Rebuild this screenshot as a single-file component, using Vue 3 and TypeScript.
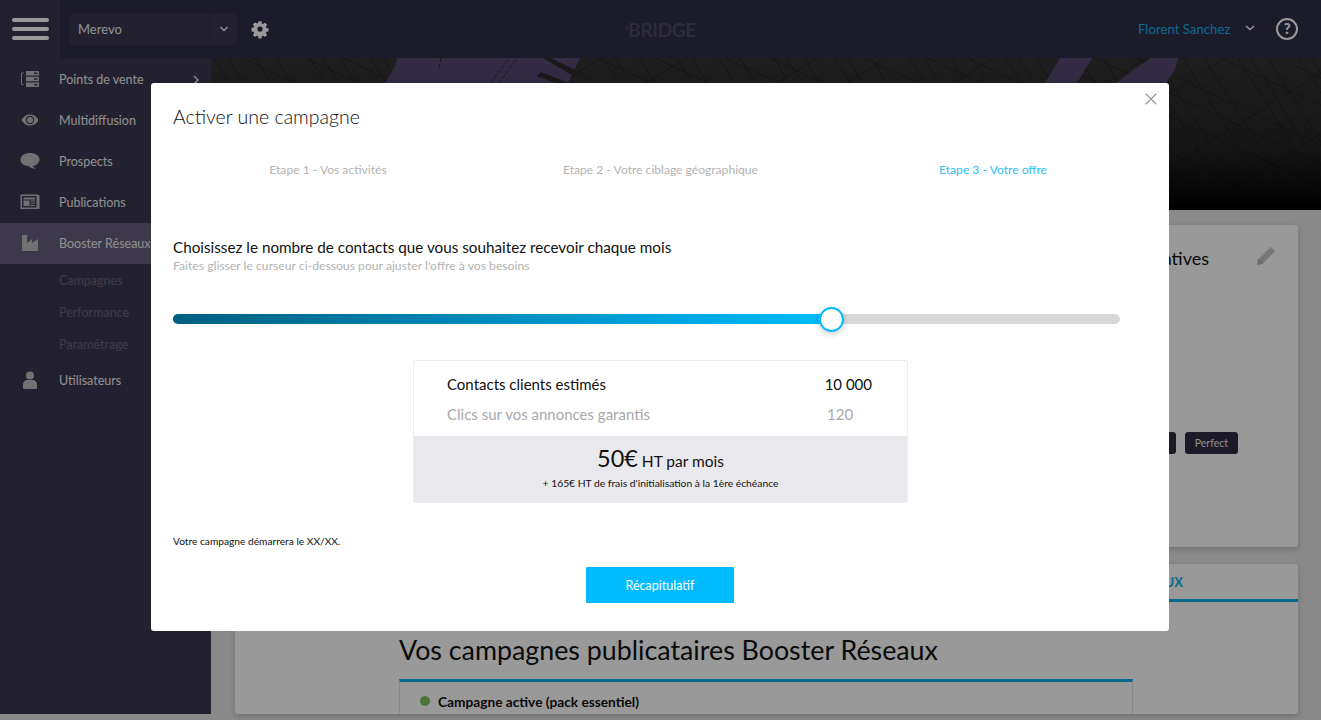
<template>
  <div class="app">
    <header class="topbar">
      <div class="burger"><span></span><span></span><span></span></div>
      <div class="account">
        <span class="account-name">Merevo</span>
        <span class="account-arrow">
          <svg width="10" height="6" viewBox="0 0 10 6"><path d="M1.500 1 5 4.500 8.500 1" fill="none" stroke="currentColor" stroke-width="1.400" /></svg>
        </span>
      </div>
      <svg class="gear" width="20" height="20" viewBox="0 0 20 20">
        <path fill-rule="evenodd" d="M8.300 1.500h3.400l.4 2.400 1.500.6 2-1.400 2.300 2.300-1.400 2 .6 1.500 2.400.4v3.400l-2.400.4-.6 1.500 1.400 2-2.300 2.300-2-1.400-1.500.6-.4 2.400H8.300l-.4-2.400-1.500-.6-2 1.400-2.300-2.300 1.400-2-.6-1.500-2.400-.4V8.800l2.400-.4.6-1.500-1.400-2 2.300-2.300 2 1.400 1.500-.6zM10 7.200a2.900 2.900 0 1 0 0 5.800a2.900 2.900 0 0 0 0-5.800z" transform="translate(1 1) scale(.9)" />
      </svg>
      <div class="logo"><sup>s</sup>BRIDGE</div>
      <div class="user">Florent Sanchez</div>
      <svg class="user-arrow" width="10" height="6" viewBox="0 0 10 6"><path d="M1 1 5 4.500 9 1" fill="none" stroke="currentColor" stroke-width="1.500" /></svg>
      <div class="help">?</div>
    </header>

    <div class="body">
      <aside class="sidebar">
        <div v-for="item in menu" :key="item.label" class="menu-row" :class="{ active: item.active, sub: item.sub }">
          <svg v-if="item.icon" class="menu-icon" width="22" height="22" viewBox="0 0 22 22" v-html="item.icon"></svg>
          <span class="menu-label">{{ item.label }}</span>
          <svg v-if="item.chevron" class="menu-chevron" width="6" height="10" viewBox="0 0 6 10"><path d="M1 1l4 4-4 4" fill="none" stroke="currentColor" stroke-width="1.300" /></svg>
        </div>
      </aside>

      <main class="content">
        <div class="hero">
          <svg width="1110" height="152" viewBox="0 0 1110 152">
            <defs>
              <linearGradient id="fade" x1="0" y1="0" x2="0" y2="1">
                <stop offset="0" stop-color="#000" stop-opacity="0" />
                <stop offset=".6" stop-color="#000" stop-opacity=".3" />
                <stop offset="1" stop-color="#000" stop-opacity="1" />
              </linearGradient>
            </defs>
            <rect width="1110" height="152" fill="#333" />
            <g stroke="#262626" stroke-width="1" fill="none">
              <path v-for="l in streets" :key="l" :d="l" />
            </g>
            <path d="M174 25 184 8 186 0H369L357 25zM834 25 849 0H881L866 25zM905 25 925 10 940 0H967L964 12 955 25z" fill="#584a73" />
            <path d="M340 0 368 14 364 19 332 0zM330 14 358 25H344L326 18z" fill="#2c2c2c" />
            <path d="M280 25 298 0M288 25 306 0M228 10 230 0" stroke="#2c2c2c" stroke-dasharray="4 2" fill="none" />
            <rect width="1110" height="152" fill="url(#fade)" />
          </svg>
        </div>

        <div class="cards">
          <section class="card top-card">
            <div class="card-head">
              <h3>Annonces alternatives</h3>
              <svg class="pencil" width="20" height="20" viewBox="0 0 20 20">
                <path d="M14.500 1 19 5.500 6.500 18 1 19 2 13.500z" />
                <path d="M3.500 13.500 15 2M5.500 15 16.500 4M7 16.500 18 5.500" stroke="#fff" stroke-width=".8" fill="none" />
              </svg>
            </div>
            <div class="tags">
              <span class="tag">Pratique</span>
              <span class="tag">Perfect</span>
            </div>
          </section>

          <section class="card bottom-card">
            <div class="tabs"><span class="tab-label">BOOSTER RÉSEAUX</span></div>
            <div class="campaigns">
              <h2>Vos campagnes publicataires Booster Réseaux</h2>
              <div class="campaign-box">
                <span class="dot"></span>
                <span class="campaign-name">Campagne active (pack essentiel)</span>
              </div>
            </div>
          </section>
        </div>
      </main>
    </div>

    <div class="overlay">
      <div class="modal">
        <svg class="close" width="12" height="12" viewBox="0 0 12 12"><path d="M.7.7l10.600 10.600M11.300.7.7 11.300" stroke="currentColor" stroke-width="1.300" fill="none" /></svg>
        <h1>Activer une campagne</h1>

        <div class="steps">
          <span v-for="(s, i) in steps" :key="s" class="step" :class="{ current: i === 2 }">{{ s }}</span>
        </div>

        <h2 class="choose">Choisissez le nombre de contacts que vous souhaitez recevoir chaque mois</h2>
        <p class="hint">Faites glisser le curseur ci-dessous pour ajuster l'offre à vos besoins</p>

        <div class="slider">
          <div class="slider-fill" :style="{ width: sliderPos + 'px' }"></div>
          <div class="slider-thumb" :style="{ left: sliderPos + 'px' }"></div>
        </div>

        <div class="offer">
          <div class="offer-rows">
            <div class="offer-row strong"><span>Contacts clients estimés</span><span class="val">10 000</span></div>
            <div class="offer-row muted"><span>Clics sur vos annonces garantis</span><span class="val">120</span></div>
          </div>
          <div class="offer-price">
            <div class="price"><b>50€</b> HT par mois</div>
            <div class="fees">+ 165€ HT de frais d'initialisation à la 1ère échéance</div>
          </div>
        </div>

        <p class="start">Votre campagne démarrera le XX/XX.</p>
        <div class="actions"><button class="recap" type="button">Récapitulatif</button></div>
      </div>
    </div>
  </div>
</template>

<script setup lang="ts">
interface MenuItem {
  label: string
  icon?: string
  active?: boolean
  sub?: boolean
  chevron?: boolean
}

const icons = {
  stores:
    '<path fill-rule="evenodd" d="M7 3h13v4.500H7zM15 4.500v1.500h3.500V4.500zM7 8.700h13v4.500H7zM15 10.200v1.500h3.500v-1.500zM7 14.400h13v4.500H7zM15 15.900v1.500h3.500v-1.500z" fill="currentColor"/><path d="M4.500 5H2.500v11.500h2" fill="none" stroke="currentColor"/>',
  eye: '<path fill-rule="evenodd" d="M11 5.500c4 0 7 2.500 8.500 5.500-1.500 3-4.500 5.500-8.500 5.500S4 14 2.500 11C4 8 7 5.500 11 5.500zm0 1.300a4.200 4.200 0 1 0 0 8.400 4.200 4.200 0 0 0 0-8.400z" fill="currentColor"/><circle cx="11" cy="11" r="3" fill="currentColor"/>',
  chat: '<path d="M11 3c5 0 9.500 2.600 9.500 6.500S16 16 13.500 16c1 1.500 3 2.200 3.500 2.700-3 0-6-1-7.500-2.700C5 15.800 1.500 13.400 1.500 9.500S6 3 11 3z" fill="currentColor"/>',
  news: '<path fill-rule="evenodd" d="M1.500 3.500h17l2 1v13.500h-19zM3 5v11.500h14.500V5z" fill="currentColor"/><path d="M4.500 6.500h11.500v2H4.500zM4.500 9.500h6v5.500h-6zM11.500 9.500h4.500v1h-4.500zM11.500 11.700h4.500v1h-4.500zM11.500 14h4.500v1h-4.500z" fill="currentColor"/>',
  factory: '<path d="M3 3h5v8l5-4v4l6-4v12H3z" fill="currentColor"/>',
  user: '<circle cx="11" cy="6.500" r="4" fill="currentColor"/><path d="M4 19v-3.500C4 12.500 6.500 11 8 11h6c1.500 0 4 1.500 4 4.500V19c0 .5-.5 1-1 1H5c-.5 0-1-.5-1-1z" fill="currentColor"/>',
}

const menu: MenuItem[] = [
  { label: 'Points de vente', icon: icons.stores, chevron: true },
  { label: 'Multidiffusion', icon: icons.eye },
  { label: 'Prospects', icon: icons.chat },
  { label: 'Publications', icon: icons.news },
  { label: 'Booster Réseaux', icon: icons.factory, active: true },
  { label: 'Campagnes', sub: true },
  { label: 'Performance', sub: true },
  { label: 'Paramétrage', sub: true },
  { label: 'Utilisateurs', icon: icons.user },
]

const steps = ['Etape 1 - Vos activités', 'Etape 2 - Votre ciblage géographique', 'Etape 3 - Votre offre']

const sliderPos = 658

// rues de la carte : espacement irrégulier mais stable
const streets: string[] = []
const gaps = [17, 31, 12, 24, 38, 15, 27, 21, 34, 13]
let x = -120
let n = 0
while (x < 1200) {
  streets.push(`M${x} 0 L${x + 95} 152`)
  x += gaps[n % gaps.length]
  n++
}
let y = -500
while (y < 700) {
  streets.push(`M0 ${y} L1110 ${y + 520}`)
  y += gaps[n % gaps.length] + 6
  n++
}
let z = -200
while (z < 1100) {
  streets.push(`M0 ${z + 400} L1110 ${z - 300}`)
  z += gaps[n % gaps.length] * 2 + 20
  n++
}
</script>

<style scoped>
.app {
  position: relative;
  width: 1321px;
  height: 720px;
  overflow: hidden;
  background: #e6e6e6;
  font-family: Lato, "Open Sans", sans-serif;
}
.topbar {
  height: 58px;
  display: flex;
  align-items: center;
  background: #302d45;
}
.burger {
  width: 60px;
  height: 58px;
  flex: none;
  background: #3b3850;
  display: flex;
  flex-direction: column;
  justify-content: center;
  gap: 5px;
  padding-left: 12px;
  box-sizing: border-box;
}
.burger span {
  display: block;
  width: 37px;
  height: 4px;
  border-radius: 2px;
  background: #fff;
}
.account {
  margin-left: 9px;
  width: 168px;
  height: 31px;
  display: flex;
  background: #3b3850;
  border-radius: 4px;
  color: #eee;
  font-size: 13px;
  line-height: 31px;
}
.account-name {
  flex: 1;
  padding-left: 9px;
}
.account-arrow {
  width: 27px;
  border-left: 1px solid #302d45;
  display: flex;
  align-items: center;
  justify-content: center;
}
.gear {
  margin-left: 13px;
  fill: #fff;
}
.logo {
  margin-left: 355px;
  width: 72px;
  color: #4a4860;
  font-size: 19px;
  font-weight: 700;
  letter-spacing: -0.3px;
}
.logo sup {
  font-size: 8px;
  vertical-align: 7px;
  line-height: 0;
}
.user {
  margin-left: 441px;
  color: #0fb1ea;
  font-size: 13.200px;
}
.user-arrow {
  margin-left: 15px;
  margin-top: -2px;
  color: #fff;
}
.help {
  margin-left: 21px;
  width: 22px;
  height: 22px;
  box-sizing: border-box;
  border: 2.500px solid #fff;
  border-radius: 50%;
  color: #fff;
  font-size: 15px;
  font-weight: 900;
  line-height: 17px;
  text-align: center;
}
.body {
  display: flex;
  height: 656px;
}
.sidebar {
  width: 211px;
  flex: none;
  box-sizing: border-box;
  padding-top: 1px;
  background: #3b3850;
  color: #eee;
  font-size: 12.500px;
}
.menu-row {
  position: relative;
  height: 41px;
  display: flex;
  align-items: center;
  padding-left: 59px;
}
.menu-row.active {
  background: #665f7d;
}
.menu-row.sub {
  height: 32px;
  color: #68657c;
}
.menu-icon {
  position: absolute;
  left: 19px;
  top: 9px;
  color: #bdbdbd;
}
.menu-chevron {
  position: absolute;
  left: 193px;
  top: 16px;
}
.content {
  flex: 1;
  min-width: 0;
  background: #e6e6e6;
}
.hero {
  height: 152px;
  overflow: hidden;
}
.hero svg {
  display: block;
}
.cards {
  padding: 15px 23px 0 24px;
  display: flex;
  flex-direction: column;
  gap: 17px;
}
.card {
  background: #fff;
  border-radius: 3px;
  box-shadow: 0 2px 6px rgba(0, 0, 0, 0.2);
}
.top-card {
  height: 322px;
  box-sizing: border-box;
  padding: 22px 22px 0 0;
}
.card-head {
  display: flex;
  justify-content: flex-end;
  align-items: center;
  gap: 47px;
}
.card-head h3 {
  margin: 0;
  font-size: 18px;
  font-weight: 400;
  color: #111;
}
.pencil {
  fill: #b5b5b5;
  margin-top: -5px;
}
.tags {
  display: flex;
  justify-content: flex-end;
  gap: 9px;
  margin: 163px 38px 0 0;
}
.tag {
  background: #2f2c43;
  color: #eee;
  font-size: 10.500px;
  line-height: 22px;
  padding: 0 10px;
  border-radius: 3px;
}
.bottom-card {
  height: 150px;
  overflow: hidden;
}
.tabs {
  height: 35px;
  border-bottom: 3px solid #10b0e9;
  display: flex;
  justify-content: flex-end;
  align-items: center;
  padding-right: 115px;
}
.tab-label {
  color: #10b0e9;
  font-size: 13px;
  font-weight: 700;
}
.campaigns {
  width: 734px;
  margin-left: 164px;
}
.campaigns h2 {
  margin: 30px 0 11px;
  font-size: 26.800px;
  font-weight: 400;
  line-height: 36px;
  color: #111;
}
.campaign-box {
  border: 1px solid #e3e3e3;
  border-top: 3px solid #10b0e9;
  height: 60px;
  padding: 11px 20px;
  box-sizing: border-box;
  display: flex;
  align-items: flex-start;
  gap: 8px;
  font-size: 13.700px;
  font-weight: 700;
  color: #111;
}
.dot {
  width: 10px;
  height: 10px;
  margin-top: 3px;
  border-radius: 50%;
  background: #7cc45c;
}
.overlay {
  position: absolute;
  inset: 0;
  background: rgba(0, 0, 0, 0.4);
}
.modal {
  position: absolute;
  left: 151px;
  top: 83px;
  width: 1018px;
  height: 548px;
  box-sizing: border-box;
  padding: 22px 49px 0 22px;
  background: #fff;
  border-radius: 3px;
  color: #111;
}
.close {
  position: absolute;
  right: 12px;
  top: 10px;
  color: #999;
}
h1 {
  margin: 0;
  font-size: 19.500px;
  line-height: 24px;
  font-weight: 300;
}
.steps {
  margin-top: 32px;
  display: grid;
  grid-template-columns: 310px 355px 310px;
  font-size: 12.100px;
  line-height: 18px;
  text-align: center;
  color: #b3b3b3;
}
.step.current {
  color: #2dbdf2;
}
.choose {
  margin: 58px 0 0;
  font-size: 15.250px;
  font-weight: 400;
  line-height: 20px;
}
.hint {
  margin: 1px 0 0;
  font-size: 12.200px;
  line-height: 16px;
  color: #b3b3b3;
}
.slider {
  position: relative;
  margin-top: 40px;
  height: 10px;
  border-radius: 5px;
  background: #d8d8d8;
}
.slider-fill {
  height: 100%;
  border-radius: 5px 0 0 5px;
  background: linear-gradient(90deg, #005f80, #00bcff);
}
.slider-thumb {
  position: absolute;
  top: -7.500px;
  width: 25px;
  height: 25px;
  margin-left: -12.500px;
  box-sizing: border-box;
  border: 2px solid #00bcff;
  border-radius: 50%;
  background: #fff;
  box-shadow: 0 2px 6px rgba(0, 0, 0, 0.2);
}
.offer {
  margin: 36px 0 0 240px;
  width: 495px;
  box-sizing: border-box;
  border: 1px solid #eeedf1;
  border-radius: 2px;
}
.offer-rows {
  padding: 8px 35px 0 33px;
  height: 75px;
  box-sizing: border-box;
}
.offer-row {
  display: flex;
  justify-content: space-between;
  height: 30px;
  line-height: 30px;
  font-size: 15px;
}
.offer-row .val {
  min-width: 45px;
}
.muted {
  color: #a9a9a9;
}
.offer-price {
  height: 66px;
  background: #e9e8ed;
  text-align: center;
  padding-top: 8px;
  box-sizing: border-box;
}
.price {
  font-size: 15.500px;
  line-height: 28px;
}
.price b {
  font-size: 23.500px;
  font-weight: 400;
}
.fees {
  font-size: 10.300px;
  line-height: 14px;
  margin-top: 1px;
}
.start {
  margin: 31px 0 0;
  font-size: 10.200px;
  line-height: 14px;
}
.actions {
  margin-top: 19px;
  display: flex;
  justify-content: center;
  padding-left: 27px;
}
.recap {
  width: 148px;
  height: 36px;
  border: 0;
  border-radius: 1px;
  background: #00bcff;
  color: #fff;
  font-family: inherit;
  font-size: 12.500px;
}
</style>

<style>
html,
body {
  margin: 0;
  background: #e6e6e6;
}
</style>
